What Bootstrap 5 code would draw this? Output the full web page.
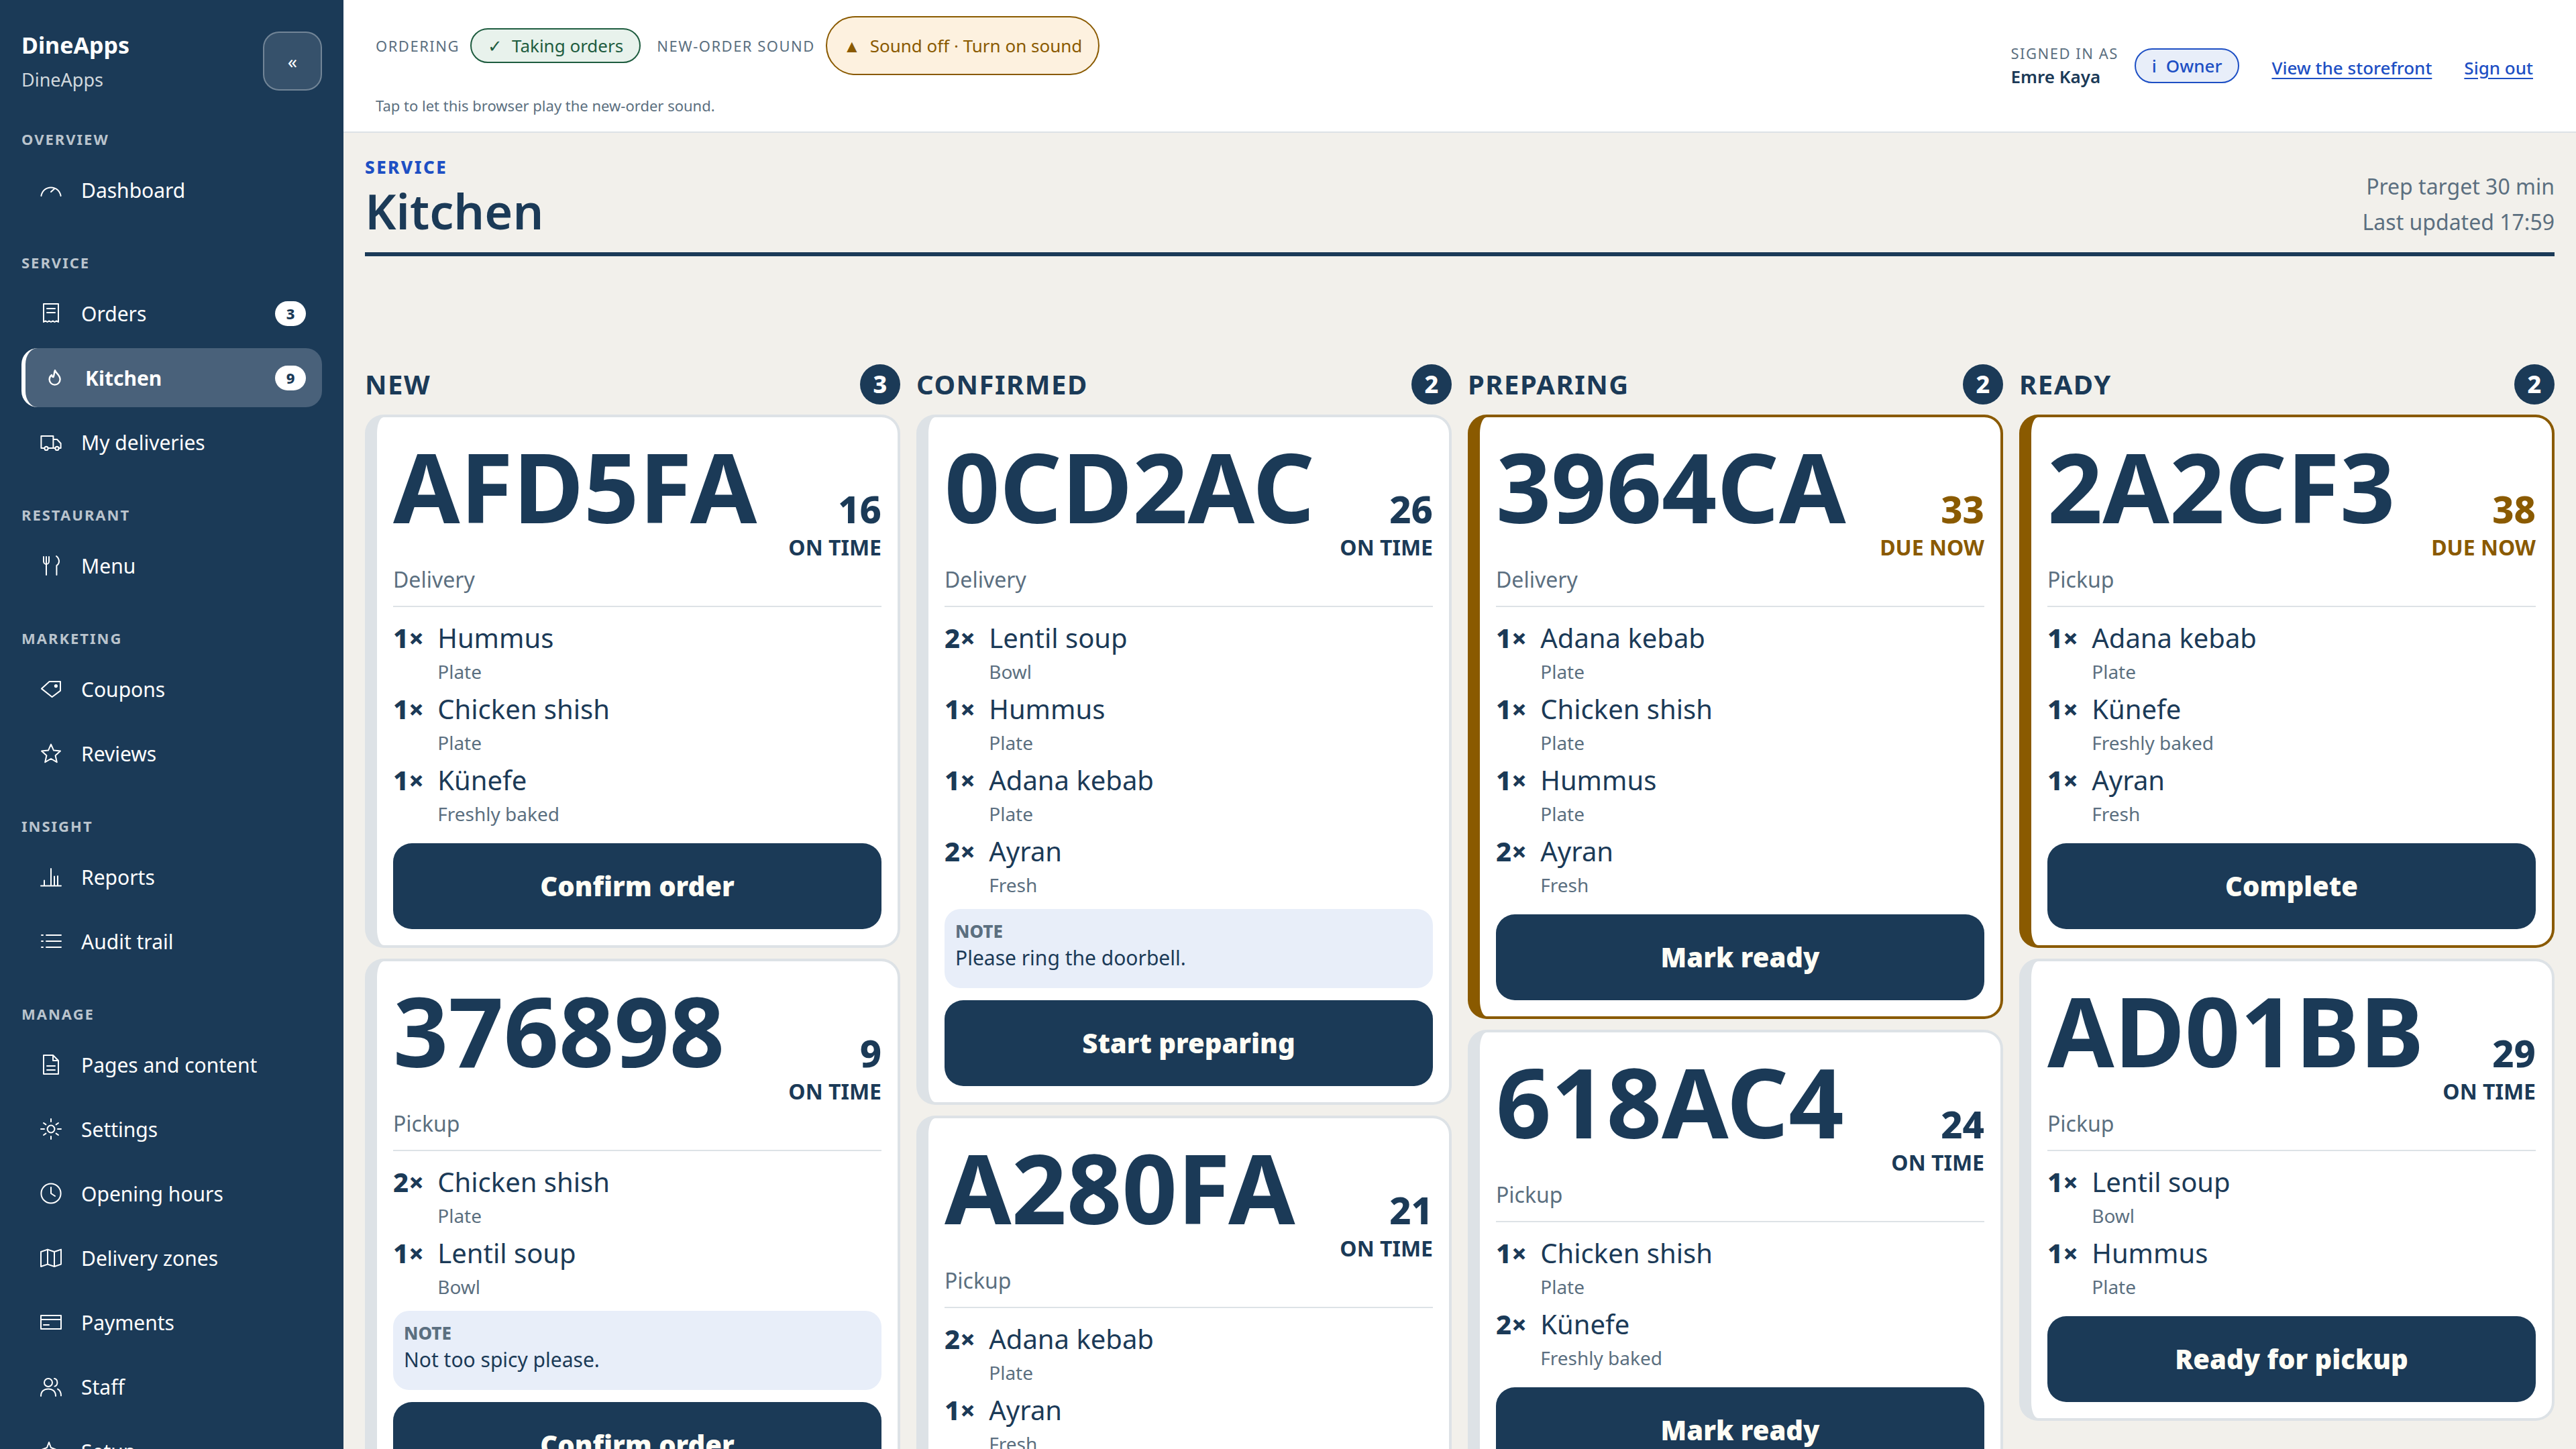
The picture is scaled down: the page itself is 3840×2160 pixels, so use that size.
<!DOCTYPE html>
<html lang="en">
<head>
<meta charset="UTF-8">
<meta name="viewport" content="width=device-width, initial-scale=1">
<title>Kitchen - DineApps</title>
<link href="https://cdn.jsdelivr.net/npm/bootstrap@5.3.0/dist/css/bootstrap.min.css" rel="stylesheet">
<style>
body { font-family: "Noto Sans", sans-serif; background: #f2f0eb; color: #1b3a57; font-size: 30px; }
.side-bar { width: 512px; background: #1b3a57; color: #fff; padding: 0 32px; }
.brand-row { height: 190px; padding-bottom: 8px; }
.brand-name { font-size: 34px; font-weight: 700; line-height: 46px; }
.brand-sub { font-size: 27px; line-height: 40px; margin-top: 9px; color: #d1d8dd; }
.collapse-btn { width: 88px; height: 88px; border-radius: 24px; background: rgba(255,255,255,.12); border: 2px solid rgba(255,255,255,.3); color: #fff; font-size: 28px; line-height: 1; padding: 0; }
.nav-label { font-size: 22px; font-weight: 700; letter-spacing: 2px; line-height: 34px; color: #bac4cd; margin-bottom: 15px; }
.nav-group { margin-bottom: 47px; }
.side-link { height: 88px; margin-bottom: 8px; padding: 0 24px 0 28px; color: #fff; font-size: 30px; border-radius: 24px; border-left: 0 solid #fff; gap: 29px; }
.side-link:hover { color: #fff; }
.side-link.active-link { background: #49617a; border-left-width: 6px; font-weight: 700; color: #fff; }
.side-link svg { width: 32px; height: 32px; flex: none; fill: none; stroke: currentColor; stroke-width: 1; stroke-linecap: round; stroke-linejoin: round; }
.count-pill { width: 46px; height: 37px; background: #fff; color: #1b3a57; font-size: 22px; font-weight: 800; display: flex; align-items: center; justify-content: center; padding: 0; }
.top-strip { height: 198px; background: #fff; border-bottom: 2px solid #dde2e6; padding: 24px 64px 0 48px; }
.strip-label { font-size: 22px; letter-spacing: 1.5px; color: #5b6f80; line-height: 32px; }
.status-pill { font-size: 26px; border-radius: 100px; border: 2px solid; display: inline-flex; align-items: center; white-space: nowrap; }
.pill-green { height: 52px; padding: 0 24px; gap: 14px; background: #e8f2ec; border-color: #1e5c3f; color: #1e5c3f; }
.pill-amber { height: 88px; padding: 0 24px; gap: 14px; background: #fdf1df; border-color: #8a5a00; color: #8a5a00; }
.pill-blue { height: 52px; padding: 0 24px; gap: 14px; background: #e8eef9; border-color: #1d4fc4; color: #1d4fc4; font-weight: 500; }
.strip-hint { font-size: 22px; line-height: 32px; color: #5b6f80; margin-top: 29px; }
.user-name { font-size: 26px; font-weight: 600; line-height: 38px; color: #1b3a57; }
.strip-link { font-size: 26px; font-weight: 500; color: #1d4fc4; text-underline-offset: 5px; margin-top: 6px; }
.page-body { padding: 32px 32px 0; }
.page-head { border-bottom: 6px solid #1b3a57; padding-bottom: 16px; margin-bottom: 161px; }
.page-kicker { font-size: 26px; font-weight: 800; letter-spacing: 2.5px; line-height: 39px; color: #1d4fc4; }
.page-title { font-size: 72px; font-weight: 600; line-height: 91px; margin: 0; color: #1b3a57; }
.page-meta { font-size: 32px; line-height: 53px; color: #5b6f80; margin-bottom: 3px; }
.lane-head { height: 60px; margin-bottom: 15px; }
.lane-title { font-size: 40px; font-weight: 700; letter-spacing: 1.5px; margin: 0; color: #1b3a57; }
.lane-count { width: 60px; height: 60px; background: #1b3a57; color: #fff; font-size: 36px; font-weight: 800; display: flex; align-items: center; justify-content: center; padding: 0; }
.ticket { border: 4px solid #dde2e6; border-left-width: 18px; border-radius: 28px; background: #fff; }
.ticket-due { border-color: #8a5a00; }
.order-code { font-size: 144px; font-weight: 700; line-height: 144px; color: #1b3a57; margin-top: 6px; }
.order-mins { font-size: 56px; font-weight: 800; line-height: 60px; }
.order-state { font-size: 32px; font-weight: 700; line-height: 48px; margin-top: 4px; white-space: nowrap; }
.ticket-due .order-mins, .ticket-due .order-state { color: #8a5a00; }
.order-type { font-size: 32px; line-height: 48px; color: #5b6f80; padding-bottom: 15px; border-bottom: 2px solid #dde2e6; margin-bottom: 16px; }
.food-line { gap: 20px; margin-bottom: 6px; }
.food-qty { font-size: 40px; font-weight: 800; line-height: 60px; }
.food-name { font-size: 40px; line-height: 60px; }
.food-sub { font-size: 28px; line-height: 40px; color: #5b6f80; }
.order-note { background: #e8eef9; border-radius: 24px; padding: 16px; margin-top: 16px; height: 118px; }
.note-head { font-size: 26px; font-weight: 800; color: #5b6f80; line-height: 34px; }
.note-text { font-size: 30px; line-height: 46px; }
.serve-btn { height: 128px; margin-top: 18px; border-radius: 28px; background: #1b3a57; border: 0; color: #fffdf5; font-size: 40px; font-weight: 900; }
.serve-btn:hover { background: #1b3a57; color: #fffdf5; }
</style>
</head>
<body>

<svg width="0" height="0" class="position-absolute">
  <symbol id="i-gauge" viewBox="0 0 16 16"><path d="M.7 12.5C1.4 8.6 4.400 6.200 8 6.200s6.600 2.400 7.300 6.300M8 9.500l2.500-2.300"/></symbol>
  <symbol id="i-receipt" viewBox="0 0 16 16"><path d="M2.500 1h11v13.500l-1.400-.8-1.400.8-1.300-.8-1.400.8-1.400-.8-1.300.8-1.400-.8-1.400.8zM5 4.500h6M5 7.500h6"/></symbol>
  <symbol id="i-flame" viewBox="0 0 16 16"><path d="M8 2.500c.3 2 3.800 3.300 3.800 6.800a4 4 0 0 1-8 0c0-1.500.7-2.600 1.700-3.300.2 1 .7 1.500 1.300 1.500C7.500 6 7.300 4 8 2.500z" stroke-width="1.200"/></symbol>
  <symbol id="i-truck" viewBox="0 0 16 16"><path d="M3 12.500H.7v-9h9v9H6M9.700 6h2.800l2.800 3v3.500h-1.500M9.700 12.500h1.300"/><circle cx="4.500" cy="12.700" r="1.300"/><circle cx="12.500" cy="12.700" r="1.300"/></symbol>
  <symbol id="i-fork" viewBox="0 0 16 16"><path d="M2.500 1.500v3.200c0 1.500 1 2.300 2 2.300s2-.8 2-2.300V1.500M4.500 1.500V15M12 1c1.500 1.200 2 2.700 2 4s-.7 2.300-1.800 3V15"/></symbol>
  <symbol id="i-tag" viewBox="0 0 16 16"><path d="M15 2.500v6.800L8.800 14 1 7.800 6.800 2.500z"/><circle cx="11.700" cy="5.800" r=".8" fill="currentColor"/></symbol>
  <symbol id="i-star" viewBox="0 0 16 16"><path d="M8 1.300l2 4.500 5 .5-3.700 3.300 1.100 5L8 12l-4.400 2.600 1.100-5L1 6.300l5-.5z"/></symbol>
  <symbol id="i-bars" viewBox="0 0 16 16"><path d="M.5 14.700h15M3 14.700v-4M8 14.700V2M13 14.700V7.500M10.500 14.700v-7"/></symbol>
  <symbol id="i-list" viewBox="0 0 16 16"><path d="M4.500 3.500h11M4.500 8h11M4.500 12.500h11M1 3.500h1M1 8h1M1 12.500h1"/></symbol>
  <symbol id="i-file" viewBox="0 0 16 16"><path d="M2.500 1h7l4 4v10h-11zM9.500 1v4h4M5 9h6M5 12h6"/></symbol>
  <symbol id="i-sun" viewBox="0 0 16 16"><circle cx="8" cy="8" r="2.700"/><path d="M8 .5v2M8 13.500v2M.5 8h2.500M13 8h2.500M2.500 3.500l1.700 1.200M11.800 11.300l1.700 1.200M2.500 12.500l1.700-1.200M11.800 4.700l1.700-1.200"/></symbol>
  <symbol id="i-clock" viewBox="0 0 16 16"><circle cx="8" cy="8" r="7.300"/><path d="M8 3.500V8l3 2"/></symbol>
  <symbol id="i-map" viewBox="0 0 16 16"><path d="M.5 3.500l5-1.700 5 1.700 5-1.700v11l-5 1.700-5-1.700-5 1.700zM5.500 1.800v11M10.500 3.500v11"/></symbol>
  <symbol id="i-card" viewBox="0 0 16 16"><path d="M.5 3h15v10H.5zM.5 6h15M2.500 10h4"/></symbol>
  <symbol id="i-people" viewBox="0 0 16 16"><circle cx="6" cy="5" r="3"/><path d="M.5 15c0-3.500 2.400-5.300 5.500-5.300s5.500 1.800 5.500 5.300M10.500 2c1.500.3 2.200 1.500 2.200 3s-.8 2.500-2 2.800M13 9.800c1.500.8 2.500 2.500 2.500 5"/></symbol>
  <symbol id="i-spark" viewBox="0 0 16 16"><path d="M6.500 1.500l1.500 4 4 1.500-4 1.500-1.500 4-1.500-4-4-1.500 4-1.500z"/></symbol>
</svg>

<div class="d-flex vh-100 overflow-hidden">
  <!-- Sidebar -->
  <aside class="side-bar flex-shrink-0 overflow-hidden">
    <div class="brand-row d-flex justify-content-between align-items-center">
      <div>
        <div class="brand-name">DineApps</div>
        <div class="brand-sub">DineApps</div>
      </div>
      <button class="btn collapse-btn">«</button>
    </div>

    <div class="nav-group">
      <div class="nav-label">OVERVIEW</div>
      <a class="side-link nav-link d-flex align-items-center" href="#"><svg><use href="#i-gauge"/></svg>Dashboard</a>
    </div>
    <div class="nav-group">
      <div class="nav-label">SERVICE</div>
      <a class="side-link nav-link d-flex align-items-center" href="#"><svg><use href="#i-receipt"/></svg><span class="flex-grow-1">Orders</span><span class="badge rounded-pill count-pill">3</span></a>
      <a class="side-link active-link nav-link d-flex align-items-center" href="#"><svg><use href="#i-flame"/></svg><span class="flex-grow-1">Kitchen</span><span class="badge rounded-pill count-pill">9</span></a>
      <a class="side-link nav-link d-flex align-items-center" href="#"><svg><use href="#i-truck"/></svg>My deliveries</a>
    </div>
    <div class="nav-group">
      <div class="nav-label">RESTAURANT</div>
      <a class="side-link nav-link d-flex align-items-center" href="#"><svg><use href="#i-fork"/></svg>Menu</a>
    </div>
    <div class="nav-group">
      <div class="nav-label">MARKETING</div>
      <a class="side-link nav-link d-flex align-items-center" href="#"><svg><use href="#i-tag"/></svg>Coupons</a>
      <a class="side-link nav-link d-flex align-items-center" href="#"><svg><use href="#i-star"/></svg>Reviews</a>
    </div>
    <div class="nav-group">
      <div class="nav-label">INSIGHT</div>
      <a class="side-link nav-link d-flex align-items-center" href="#"><svg><use href="#i-bars"/></svg>Reports</a>
      <a class="side-link nav-link d-flex align-items-center" href="#"><svg><use href="#i-list"/></svg>Audit trail</a>
    </div>
    <div class="nav-group">
      <div class="nav-label">MANAGE</div>
      <a class="side-link nav-link d-flex align-items-center" href="#"><svg><use href="#i-file"/></svg>Pages and content</a>
      <a class="side-link nav-link d-flex align-items-center" href="#"><svg><use href="#i-sun"/></svg>Settings</a>
      <a class="side-link nav-link d-flex align-items-center" href="#"><svg><use href="#i-clock"/></svg>Opening hours</a>
      <a class="side-link nav-link d-flex align-items-center" href="#"><svg><use href="#i-map"/></svg>Delivery zones</a>
      <a class="side-link nav-link d-flex align-items-center" href="#"><svg><use href="#i-card"/></svg>Payments</a>
      <a class="side-link nav-link d-flex align-items-center" href="#"><svg><use href="#i-people"/></svg>Staff</a>
      <a class="side-link nav-link d-flex align-items-center" href="#"><svg><use href="#i-spark"/></svg>Setup</a>
    </div>
  </aside>

  <div class="flex-grow-1 d-flex flex-column overflow-hidden">
    <!-- Top strip -->
    <header class="top-strip d-flex justify-content-between flex-shrink-0">
      <div>
        <div class="d-flex align-items-center">
          <span class="strip-label me-3">ORDERING</span>
          <span class="status-pill pill-green me-4">✓ <span>Taking orders</span></span>
          <span class="strip-label me-3">NEW-ORDER SOUND</span>
          <span class="status-pill pill-amber"><span>▲</span> <span>Sound off · Turn on sound</span></span>
        </div>
        <div class="strip-hint">Tap to let this browser play the new-order sound.</div>
      </div>
      <div class="d-flex align-items-center mb-4">
        <div class="me-4">
          <div class="strip-label">SIGNED IN AS</div>
          <div class="user-name">Emre Kaya</div>
        </div>
        <span class="status-pill pill-blue me-5">i <span>Owner</span></span>
        <a class="strip-link me-5" href="#">View the storefront</a>
        <a class="strip-link" href="#">Sign out</a>
      </div>
    </header>

    <main class="page-body">
      <div class="page-head d-flex justify-content-between align-items-end">
        <div>
          <div class="page-kicker">SERVICE</div>
          <h1 class="page-title">Kitchen</h1>
        </div>
        <div class="page-meta text-end">
          <div>Prep target 30 min</div>
          <div>Last updated 17:59</div>
        </div>
      </div>

      <div class="row g-4">
        <!-- New -->
        <div class="col-3">
          <div class="lane-head d-flex justify-content-between align-items-center">
            <h2 class="lane-title">NEW</h2><span class="badge rounded-circle lane-count">3</span>
          </div>
          <div class="d-flex flex-column gap-3">
            <div class="card ticket">
              <div class="card-body p-4">
                <div class="d-flex justify-content-between align-items-baseline">
                  <div class="order-code">AFD5FA</div>
                  <div class="text-end"><div class="order-mins">16</div><div class="order-state">ON TIME</div></div>
                </div>
                <div class="order-type">Delivery</div>
                <div class="d-flex food-line"><span class="food-qty">1×</span><div><div class="food-name">Hummus</div><div class="food-sub">Plate</div></div></div>
                <div class="d-flex food-line"><span class="food-qty">1×</span><div><div class="food-name">Chicken shish</div><div class="food-sub">Plate</div></div></div>
                <div class="d-flex food-line"><span class="food-qty">1×</span><div><div class="food-name">Künefe</div><div class="food-sub">Freshly baked</div></div></div>
                <button class="btn serve-btn w-100">Confirm order</button>
              </div>
            </div>
            <div class="card ticket">
              <div class="card-body p-4">
                <div class="d-flex justify-content-between align-items-baseline">
                  <div class="order-code">376898</div>
                  <div class="text-end"><div class="order-mins">9</div><div class="order-state">ON TIME</div></div>
                </div>
                <div class="order-type">Pickup</div>
                <div class="d-flex food-line"><span class="food-qty">2×</span><div><div class="food-name">Chicken shish</div><div class="food-sub">Plate</div></div></div>
                <div class="d-flex food-line"><span class="food-qty">1×</span><div><div class="food-name">Lentil soup</div><div class="food-sub">Bowl</div></div></div>
                <div class="order-note"><div class="note-head">NOTE</div><div class="note-text">Not too spicy please.</div></div>
                <button class="btn serve-btn w-100">Confirm order</button>
              </div>
            </div>
          </div>
        </div>

        <!-- Confirmed -->
        <div class="col-3">
          <div class="lane-head d-flex justify-content-between align-items-center">
            <h2 class="lane-title">CONFIRMED</h2><span class="badge rounded-circle lane-count">2</span>
          </div>
          <div class="d-flex flex-column gap-3">
            <div class="card ticket">
              <div class="card-body p-4">
                <div class="d-flex justify-content-between align-items-baseline">
                  <div class="order-code">0CD2AC</div>
                  <div class="text-end"><div class="order-mins">26</div><div class="order-state">ON TIME</div></div>
                </div>
                <div class="order-type">Delivery</div>
                <div class="d-flex food-line"><span class="food-qty">2×</span><div><div class="food-name">Lentil soup</div><div class="food-sub">Bowl</div></div></div>
                <div class="d-flex food-line"><span class="food-qty">1×</span><div><div class="food-name">Hummus</div><div class="food-sub">Plate</div></div></div>
                <div class="d-flex food-line"><span class="food-qty">1×</span><div><div class="food-name">Adana kebab</div><div class="food-sub">Plate</div></div></div>
                <div class="d-flex food-line"><span class="food-qty">2×</span><div><div class="food-name">Ayran</div><div class="food-sub">Fresh</div></div></div>
                <div class="order-note"><div class="note-head">NOTE</div><div class="note-text">Please ring the doorbell.</div></div>
                <button class="btn serve-btn w-100">Start preparing</button>
              </div>
            </div>
            <div class="card ticket">
              <div class="card-body p-4">
                <div class="d-flex justify-content-between align-items-baseline">
                  <div class="order-code">A280FA</div>
                  <div class="text-end"><div class="order-mins">21</div><div class="order-state">ON TIME</div></div>
                </div>
                <div class="order-type">Pickup</div>
                <div class="d-flex food-line"><span class="food-qty">2×</span><div><div class="food-name">Adana kebab</div><div class="food-sub">Plate</div></div></div>
                <div class="d-flex food-line"><span class="food-qty">1×</span><div><div class="food-name">Ayran</div><div class="food-sub">Fresh</div></div></div>
              </div>
            </div>
          </div>
        </div>

        <!-- Preparing -->
        <div class="col-3">
          <div class="lane-head d-flex justify-content-between align-items-center">
            <h2 class="lane-title">PREPARING</h2><span class="badge rounded-circle lane-count">2</span>
          </div>
          <div class="d-flex flex-column gap-3">
            <div class="card ticket ticket-due">
              <div class="card-body p-4">
                <div class="d-flex justify-content-between align-items-baseline">
                  <div class="order-code">3964CA</div>
                  <div class="text-end"><div class="order-mins">33</div><div class="order-state">DUE NOW</div></div>
                </div>
                <div class="order-type">Delivery</div>
                <div class="d-flex food-line"><span class="food-qty">1×</span><div><div class="food-name">Adana kebab</div><div class="food-sub">Plate</div></div></div>
                <div class="d-flex food-line"><span class="food-qty">1×</span><div><div class="food-name">Chicken shish</div><div class="food-sub">Plate</div></div></div>
                <div class="d-flex food-line"><span class="food-qty">1×</span><div><div class="food-name">Hummus</div><div class="food-sub">Plate</div></div></div>
                <div class="d-flex food-line"><span class="food-qty">2×</span><div><div class="food-name">Ayran</div><div class="food-sub">Fresh</div></div></div>
                <button class="btn serve-btn w-100">Mark ready</button>
              </div>
            </div>
            <div class="card ticket">
              <div class="card-body p-4">
                <div class="d-flex justify-content-between align-items-baseline">
                  <div class="order-code">618AC4</div>
                  <div class="text-end"><div class="order-mins">24</div><div class="order-state">ON TIME</div></div>
                </div>
                <div class="order-type">Pickup</div>
                <div class="d-flex food-line"><span class="food-qty">1×</span><div><div class="food-name">Chicken shish</div><div class="food-sub">Plate</div></div></div>
                <div class="d-flex food-line"><span class="food-qty">2×</span><div><div class="food-name">Künefe</div><div class="food-sub">Freshly baked</div></div></div>
                <button class="btn serve-btn w-100">Mark ready</button>
              </div>
            </div>
          </div>
        </div>

        <!-- Ready -->
        <div class="col-3">
          <div class="lane-head d-flex justify-content-between align-items-center">
            <h2 class="lane-title">READY</h2><span class="badge rounded-circle lane-count">2</span>
          </div>
          <div class="d-flex flex-column gap-3">
            <div class="card ticket ticket-due">
              <div class="card-body p-4">
                <div class="d-flex justify-content-between align-items-baseline">
                  <div class="order-code">2A2CF3</div>
                  <div class="text-end"><div class="order-mins">38</div><div class="order-state">DUE NOW</div></div>
                </div>
                <div class="order-type">Pickup</div>
                <div class="d-flex food-line"><span class="food-qty">1×</span><div><div class="food-name">Adana kebab</div><div class="food-sub">Plate</div></div></div>
                <div class="d-flex food-line"><span class="food-qty">1×</span><div><div class="food-name">Künefe</div><div class="food-sub">Freshly baked</div></div></div>
                <div class="d-flex food-line"><span class="food-qty">1×</span><div><div class="food-name">Ayran</div><div class="food-sub">Fresh</div></div></div>
                <button class="btn serve-btn w-100">Complete</button>
              </div>
            </div>
            <div class="card ticket">
              <div class="card-body p-4">
                <div class="d-flex justify-content-between align-items-baseline">
                  <div class="order-code">AD01BB</div>
                  <div class="text-end"><div class="order-mins">29</div><div class="order-state">ON TIME</div></div>
                </div>
                <div class="order-type">Pickup</div>
                <div class="d-flex food-line"><span class="food-qty">1×</span><div><div class="food-name">Lentil soup</div><div class="food-sub">Bowl</div></div></div>
                <div class="d-flex food-line"><span class="food-qty">1×</span><div><div class="food-name">Hummus</div><div class="food-sub">Plate</div></div></div>
                <button class="btn serve-btn w-100">Ready for pickup</button>
              </div>
            </div>
          </div>
        </div>
      </div>
    </main>
  </div>
</div>

<script src="https://cdn.jsdelivr.net/npm/bootstrap@5.3.0/dist/js/bootstrap.bundle.min.js"></script>
</body>
</html>
